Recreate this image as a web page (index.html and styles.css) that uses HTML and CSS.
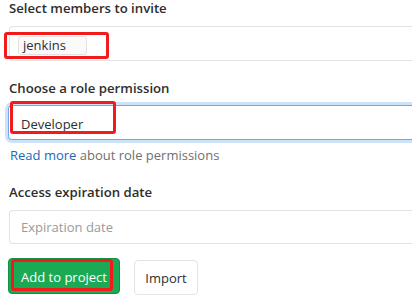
FILE: index.html
```html
<!DOCTYPE html>
<html>
<head>
<meta charset="utf-8">
<link rel="stylesheet" href="styles.css">
</head>
<body>
<form class="invite">
  <div class="group">
    <label class="label">Select members to invite</label>
    <div class="field field-tokens">
      <span class="token">jenkins</span>
      <span class="mark mark-token"></span>
    </div>
  </div>
  <div class="group group-role">
    <label class="label">Choose a role permission</label>
    <div class="field field-focus">
      <span class="value">Developer</span>
      <span class="mark mark-role"></span>
    </div>
    <p class="help"><a class="link" href="#">Read more</a> about role permissions</p>
  </div>
  <div class="group group-date">
    <label class="label">Access expiration date</label>
    <div class="field field-date">
      <span class="placeholder">Expiration date</span>
    </div>
  </div>
  <div class="actions">
    <button type="button" class="btn btn-success">Add to project<span class="mark mark-btn"></span></button>
    <button type="button" class="btn btn-default">Import</button>
  </div>
</form>
</body>
</html>
```
FILE: styles.css
```css
html, body {
  margin: 0;
  padding: 0;
  background: #ffffff;
}
body {
  font-family: "Open Sans", "Noto Sans", sans-serif;
  color: #2e2e2e;
  overflow: hidden;
}
.invite {
  padding: 0 0 0 9px;
}
.group {
  display: flex;
  flex-direction: column;
}
.label {
  display: block;
  font-size: 13.2px;
  font-weight: 600;
  line-height: 17px;
  height: 17px;
  color: #2e2e2e;
}
.field {
  position: relative;
  box-sizing: border-box;
  margin-top: 9px;
  height: 35px;
  border: 1px solid #e3e3e3;
  border-right: none;
  border-radius: 4px 0 0 4px;
  display: flex;
  align-items: center;
  padding-left: 11px;
  font-size: 13px;
}
.field-tokens {
  align-items: flex-start;
  padding-left: 8px;
  padding-top: 9px;
}
.token {
  display: inline-block;
  box-sizing: border-box;
  height: 19px;
  line-height: 17px;
  padding: 0 20px 0 4px;
  border: 1px solid #e3e3e3;
  border-radius: 3px;
  background: #fafafa;
  color: #2e2e2e;
  font-size: 13px;
}
.group-role {
  margin-top: 19px;
}
.field-focus {
  margin-left: -1px;
  margin-top: 8px;
  border-color: #6fa9e6;
  box-shadow: 0 0 0 3px rgba(140, 190, 240, 0.45);
  padding-left: 12px;
}
.value {
  color: #2e2e2e;
  padding-top: 2px;
}
.group-date {
  margin-top: 21px;
}
.field-date {
  height: 34px;
}
.placeholder {
  color: #9a9a9a;
}
.help {
  margin: 7px 0 0 1px;
  font-size: 13px;
  line-height: 16px;
  color: #707070;
}
.link {
  color: #1b69b6;
  text-decoration: none;
}
.mark {
  position: absolute;
  border: 3px solid #f21b1b;
  border-radius: 3px;
  pointer-events: none;
}
.mark-token {
  left: -6px;
  top: 5px;
  width: 99px;
  height: 21px;
}
.mark-role {
  left: 1px;
  top: -5px;
  width: 100px;
  height: 27px;
}
.actions {
  display: flex;
  gap: 14px;
  margin-top: 14px;
  align-items: flex-start;
}
.btn {
  position: relative;
  box-sizing: border-box;
  font-family: inherit;
  font-size: 13px;
  white-space: nowrap;
  border-radius: 4px;
  padding: 0;
  cursor: pointer;
}
.btn-success {
  width: 112px;
  height: 36px;
  margin-left: -1px;
  padding-top: 1px;
  background: #1aaa55;
  border: 1px solid #168f48;
  color: #ffffff;
}
.btn-default {
  width: 64px;
  height: 35px;
  margin-top: 2px;
  background: #ffffff;
  border: 1px solid #e3e3e3;
  color: #2e2e2e;
}
.mark-btn {
  left: 2px;
  top: 0;
  width: 96px;
  height: 26px;
}
```
